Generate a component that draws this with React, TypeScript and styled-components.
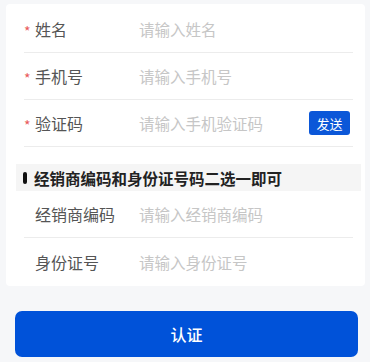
import React from "react";
import styled, {createGlobalStyle} from "styled-components";

const Global = createGlobalStyle`
  body {
    margin: 0;
    background: #f6f7f9;
    font-family: "Noto Sans CJK SC", "Noto Sans", sans-serif;
  }
`
const Page = styled.div`
  padding: 4px 6px 0 6px;
  display: flex;
  flex-direction: column;
`
const Card = styled.div`
  background: white;
  border-radius: 4px;
  padding: 2px 12px 1px 18px;
  margin-right: -1px;
`
const Row = styled.div<{ last?: boolean }>`
  display: flex;
  align-items: center;
  height: 47px;
  box-sizing: border-box;
  border-bottom: ${p => p.last ? 'none' : '1px solid #ececec'};
`
const Label = styled.div`
  width: 115px;
  box-sizing: border-box;
  flex-shrink: 0;
  display: flex;
  align-items: center;
  font-size: 16px;
  color: #555;
  padding-left: 11px;
  position: relative;
`
const Star = styled.span`
  position: absolute;
  left: 0;
  top: 50%;
  transform: translateY(-35%);
  color: #e95a5a;
  font-size: 14px;
  line-height: 1;
`
const Placeholder = styled.div`
  flex: 1;
  font-size: 15.5px;
  color: #c6c6c6;
`
const SendButton = styled.button`
  border: none;
  background: #0b57d8;
  color: white;
  font-family: inherit;
  font-size: 13px;
  width: 41px;
  height: 24px;
  border-radius: 3px;
  padding: 0;
  margin-right: 3px;
`
const Section = styled.div`
  background: #f5f5f5;
  margin: 17px -8px 0 -8px;
  height: 27px;
  display: flex;
  align-items: center;
  padding-left: 7px;
  gap: 7px;
  font-size: 15.5px;
  font-weight: bold;
  color: #222;

  > i {
    width: 4px;
    height: 12px;
    border-radius: 2px;
    background: #111;
  }
`
const Submit = styled.button`
  margin: 25px 6px 0 9px;
  height: 46px;
  border: none;
  border-radius: 7px;
  background: #0052d9;
  color: white;
  font-family: inherit;
  font-size: 16px;
  font-weight: 500;
`

type Field = {
    label: string
    placeholder: string
    required?: boolean
    send?: boolean
}
const required: Field[] = [
    {label: '姓名', placeholder: '请输入姓名', required: true},
    {label: '手机号', placeholder: '请输入手机号', required: true},
    {label: '验证码', placeholder: '请输入手机验证码', required: true, send: true},
]
const optional: Field[] = [
    {label: '经销商编码', placeholder: '请输入经销商编码'},
    {label: '身份证号', placeholder: '请输入身份证号'},
]

const App: React.FC = () => {
    return (
        <Page>
            <Global/>
            <Card>
                {required.map(f => (
                    <Row key={f.label}>
                        <Label>{f.required && <Star>*</Star>}{f.label}</Label>
                        <Placeholder>{f.placeholder}</Placeholder>
                        {f.send && <SendButton>发送</SendButton>}
                    </Row>
                ))}
                <Section><i/>经销商编码和身份证号码二选一即可</Section>
                {optional.map((f, i) => (
                    <Row key={f.label} last={i === optional.length - 1}>
                        <Label>{f.label}</Label>
                        <Placeholder>{f.placeholder}</Placeholder>
                    </Row>
                ))}
            </Card>
            <Submit>认证</Submit>
        </Page>
    )
}
export default App
